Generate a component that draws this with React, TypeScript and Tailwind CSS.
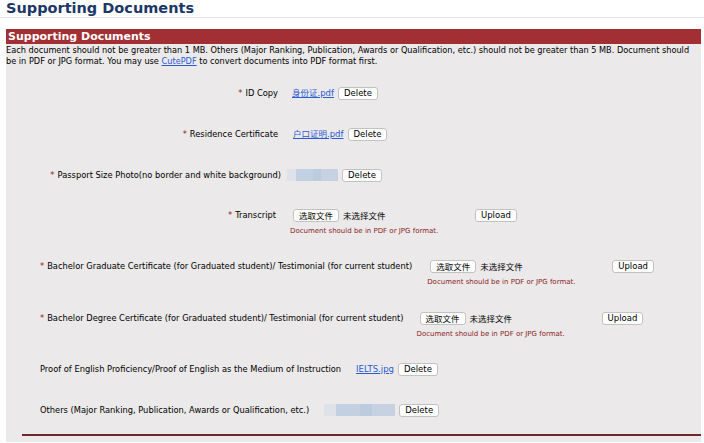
import React from 'react';

const font = { fontFamily: '"DejaVu Sans", Verdana, sans-serif' };

function Star() {
  return <span className="text-[#8b1d1d] mr-[3px]">*</span>;
}

function Btn({ children, cjk }: { children: React.ReactNode; cjk?: boolean }) {
  return (
    <button
      className="h-[13px] px-[5px] bg-white border border-[#c2c2c2] rounded-[3px] text-black leading-none text-[8.5px]"
      style={cjk ? { fontFamily: '"Noto Sans CJK SC", sans-serif' } : font}
    >
      {children}
    </button>
  );
}

function FileLink({ name }: { name: string }) {
  return (
    <a
      href="#"
      className="text-[#2a5bd0] underline text-[8.5px] mr-[4px]"
      style={{ fontFamily: '"DejaVu Sans", "Noto Sans CJK SC", sans-serif' }}
    >
      {name}
    </a>
  );
}

function Blurred({ w }: { w: string }) {
  return (
    <div className={`flex h-[12px] ${w} mr-[4px]`}>
      <div className="flex-1 bg-[#dfe2e8]" />
      <div className="flex-[2] bg-[#c3d0e1]" />
      <div className="flex-1 bg-[#bccbdd]" />
      <div className="flex-[2] bg-[#c6d2e2]" />
    </div>
  );
}

function ErrorText() {
  return (
    <div className="text-[7px] text-[#8b1d1d] leading-[10px] mt-[4px]" style={font}>
      Document should be in PDF or JPG format.
    </div>
  );
}

function UploadCell() {
  return (
    <div className="flex flex-col">
      <div className="flex items-center h-[14px]">
        <div className="flex items-center w-[182px]">
          <Btn cjk>选取文件</Btn>
          <span className="ml-[4px] text-[8.5px] text-black" style={{ fontFamily: '"Noto Sans CJK SC", sans-serif' }}>
            未选择文件
          </span>
        </div>
        <Btn>Upload</Btn>
      </div>
      <div className="-ml-[3px]">
        <ErrorText />
      </div>
    </div>
  );
}

export default function App() {
  return (
    <div className="w-[704px] h-[443px] bg-white overflow-hidden text-black" style={font}>
      <div className="h-[18px] border-b border-[#e6e6e6] px-[6px]">
        <h1 className="text-[14.5px] font-bold text-[#1c3767] leading-[17px]">Supporting Documents</h1>
      </div>
      <div className="ml-[6px] mr-[3px] mt-[11px] bg-[#ebe9ea] pb-[6px]">
        <div className="h-[15px] bg-[#a22f33] px-[2px] text-white font-bold text-[11px] leading-[15px]">
          Supporting Documents
        </div>
        <p className="text-[8.2px] leading-[11px] pt-[1px]">
          Each document should not be greater than 1 MB. Others (Major Ranking, Publication, Awards or Qualification, etc.) should not be greater than 5 MB. Document should be in PDF or JPG format. You may use <a href="#" className="text-[#2a5bd0] underline">CutePDF</a> to convert documents into PDF format first.
        </p>

        <div className="text-[8.3px]">
          <div className="flex items-center h-[14px] mt-[19px]">
            <div className="w-[272px] text-right mr-[14px]"><Star />ID Copy</div>
            <FileLink name="身份证.pdf" />
            <Btn>Delete</Btn>
          </div>

          <div className="flex items-center h-[14px] mt-[27px]">
            <div className="w-[272px] text-right mr-[15px]"><Star />Residence Certificate</div>
            <FileLink name="户口证明.pdf" />
            <Btn>Delete</Btn>
          </div>

          <div className="flex items-center h-[14px] mt-[27px]">
            <div className="w-[275px] text-right mr-[6px]"><Star />Passport Size Photo(no border and white background)</div>
            <Blurred w="w-[51px]" />
            <Btn>Delete</Btn>
          </div>

          <div className="flex items-start mt-[26px]">
            <div className="w-[270px] text-right mr-[17px] leading-[14px]"><Star />Transcript</div>
            <UploadCell />
          </div>

          <div className="flex items-start mt-[23px]">
            <div className="pl-[34px] mr-[18px] leading-[14px]">
              <Star />Bachelor Graduate Certificate (for Graduated student)/ Testimonial (for current student)
            </div>
            <UploadCell />
          </div>

          <div className="flex items-start mt-[24px]">
            <div className="pl-[34px] mr-[16px] leading-[14px]">
              <Star />Bachelor Degree Certificate (for Graduated student)/ Testimonial (for current student)
            </div>
            <UploadCell />
          </div>

          <div className="flex items-center h-[14px] mt-[23px]">
            <div className="pl-[34px] mr-[15px]">Proof of English Proficiency/Proof of English as the Medium of Instruction</div>
            <FileLink name="IELTS.jpg" />
            <Btn>Delete</Btn>
          </div>

          <div className="flex items-center h-[14px] mt-[27px]">
            <div className="pl-[34px] mr-[15px]">Others (Major Ranking, Publication, Awards or Qualification, etc.)</div>
            <Blurred w="w-[71px]" />
            <Btn>Delete</Btn>
          </div>
        </div>

        <div className="ml-[16px] mt-[17px] h-[2px] bg-[#6e2a2a]" />
      </div>
    </div>
  );
}
